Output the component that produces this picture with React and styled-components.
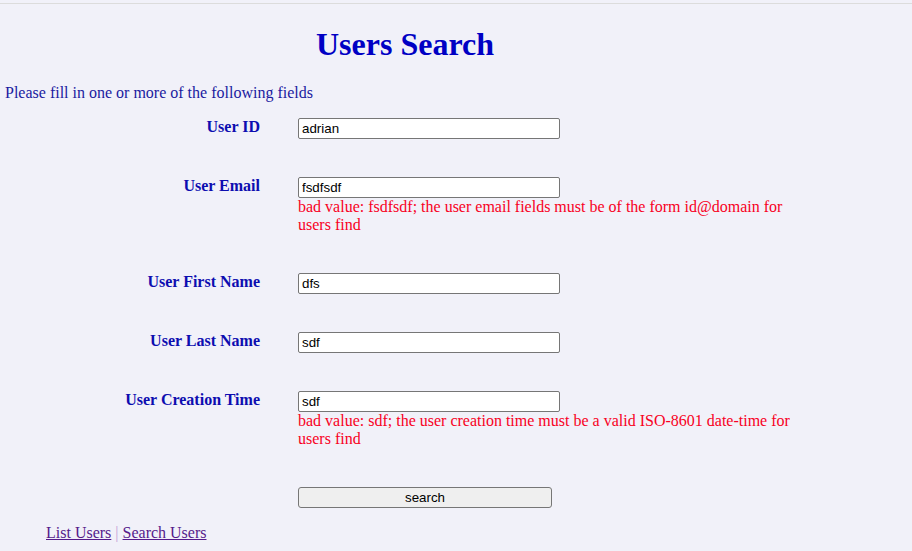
import React from 'react'
import styled, { createGlobalStyle } from 'styled-components'

const Global = createGlobalStyle`
  html, body {
    margin: 0;
    background: #f1f1f9;
  }
  body {
    font-family: "Liberation Serif", "Times New Roman", serif;
    font-size: 16px;
  }
`

const Page = styled.div`
  margin-top: 3px;
  border-top: 1px solid #dcdcdc;
`

const Content = styled.div`
  padding-left: 5px;
  width: 800px;
`

const Title = styled.h1`
  margin: 22px 0 21px;
  text-align: center;
  font-size: 32px;
  font-weight: bold;
  color: #0000c4;
`

const Intro = styled.p`
  margin: 0 0 16px 0;
  color: #1a1aa0;
`

const Form = styled.form`
  display: grid;
  grid-template-columns: 255px 1fr;
  column-gap: 38px;
`

const Label = styled.label`
  text-align: right;
  font-weight: bold;
  color: #0d0db0;
  line-height: 18px;
  margin-bottom: ${p => (p.$last ? '16px' : '38px')};
`

const Field = styled.div`
  margin-bottom: ${p => (p.$last ? '16px' : '38px')};
`

const Input = styled.input`
  box-sizing: border-box;
  display: block;
  width: 262px;
  height: 21px;
  padding: 1px 3px;
  border: 1px solid #767676;
  border-radius: 2px;
  background: #fff;
  font-family: "Liberation Sans", Arial, sans-serif;
  font-size: 13.33px;
  color: #000;
`

const ErrorText = styled.div`
  color: #f80023;
  line-height: 18.4px;
`

const Button = styled.button`
  box-sizing: border-box;
  display: block;
  width: 254px;
  height: 21px;
  padding: 0;
  border: 1px solid #767676;
  border-radius: 3px;
  background: #efefef;
  font-family: "Liberation Sans", Arial, sans-serif;
  font-size: 13.33px;
  color: #000;
`

const Footer = styled.div`
  padding-left: 41px;
  color: #551a8b;
`

const NavLink = styled.a`
  color: #551a8b;
  text-decoration: underline;
`

const Sep = styled.span`
  color: #c6a4d8;
`

const fields = [
  { label: 'User ID', value: 'adrian' },
  {
    label: 'User Email',
    value: 'fsdfsdf',
    error: 'bad value: fsdfsdf; the user email fields must be of the form id@domain for users find',
  },
  { label: 'User First Name', value: 'dfs' },
  { label: 'User Last Name', value: 'sdf' },
  {
    label: 'User Creation Time',
    value: 'sdf',
    error: 'bad value: sdf; the user creation time must be a valid ISO-8601 date-time for users find',
  },
]

export default function App() {
  return (
    <>
      <Global />
      <Page>
        <Content>
          <Title>Users Search</Title>
          <Intro>Please fill in one or more of the following fields</Intro>
          <Form onSubmit={e => e.preventDefault()}>
            {fields.map(f => (
              <React.Fragment key={f.label}>
                <Label>{f.label}</Label>
                <Field>
                  <Input defaultValue={f.value} />
                  {f.error && <ErrorText>{f.error}</ErrorText>}
                </Field>
              </React.Fragment>
            ))}
            <Label $last />
            <Field $last>
              <Button type="submit">search</Button>
            </Field>
          </Form>
          <Footer>
            <NavLink href="#">List Users</NavLink> <Sep>|</Sep>{' '}
            <NavLink href="#">Search Users</NavLink>
          </Footer>
        </Content>
      </Page>
    </>
  )
}
